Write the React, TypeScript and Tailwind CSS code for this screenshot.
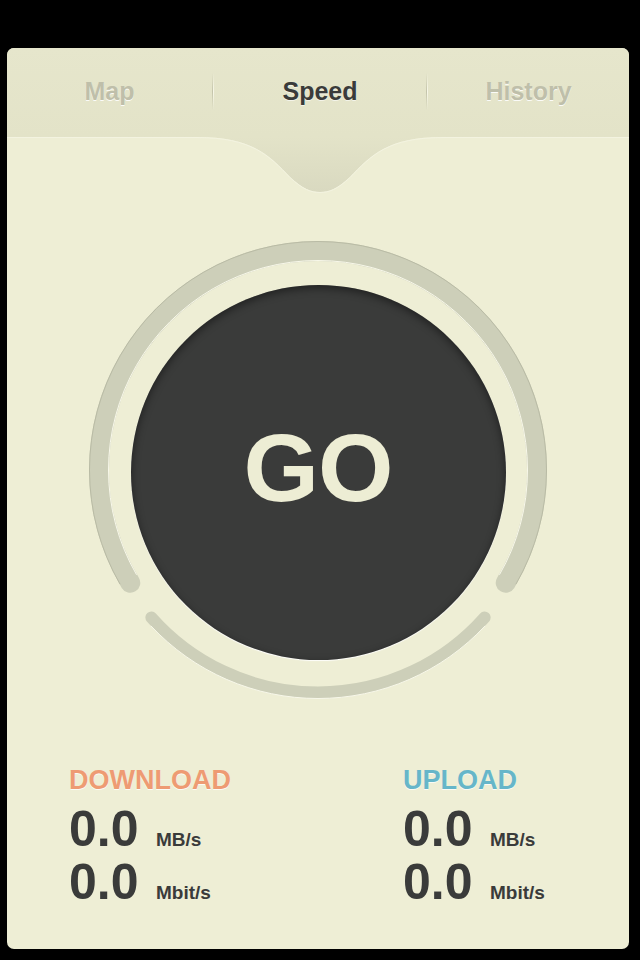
import React from "react";

const CX = 235;
const CY = 235;

function pt(r: number, deg: number, side: -1 | 1) {
  const a = (deg * Math.PI) / 180;
  return [CX + side * r * Math.cos(a), CY + r * Math.sin(a)];
}

function Gauge() {
  const r1 = 219;
  const a1 = 31;
  const [l1x, l1y] = pt(r1, a1, -1);
  const [r1x, r1y] = pt(r1, a1, 1);
  const ro = 228.5;
  const [lox, loy] = pt(ro, a1 - 1, -1);
  const [rox, roy] = pt(ro, a1 - 1, 1);
  const ri = 209.5;
  const [lix, liy] = pt(ri, a1 - 1, -1);
  const [rix, riy] = pt(ri, a1 - 1, 1);
  const r2 = 222.5;
  const a2 = 41.5;
  const [l2x, l2y] = pt(r2, a2, -1);
  const [r2x, r2y] = pt(r2, a2, 1);
  const r2o = 228.5;
  const [l2ox, l2oy] = pt(r2o, a2 + 1.5, -1);
  const [r2ox, r2oy] = pt(r2o, a2 + 1.5, 1);
  return (
    <div className="relative w-[470px] h-[470px] flex items-center justify-center">
      <svg className="absolute inset-0" width="470" height="470" viewBox="0 0 470 470">
        <path
          d={`M ${l1x} ${l1y} A ${r1} ${r1} 0 1 1 ${r1x} ${r1y}`}
          fill="none"
          stroke="#cdcfb9"
          strokeWidth="20"
          strokeLinecap="round"
        />
        <path
          d={`M ${lox} ${loy} A ${ro} ${ro} 0 1 1 ${rox} ${roy}`}
          fill="none"
          stroke="#b9bba5"
          strokeWidth="1"
        />
        <path
          d={`M ${lix} ${liy} A ${ri} ${ri} 0 1 1 ${rix} ${riy}`}
          fill="none"
          stroke="#f8f8ea"
          strokeWidth="1"
        />
        <path
          d={`M ${l2x} ${l2y} A ${r2} ${r2} 0 0 0 ${r2x} ${r2y}`}
          fill="none"
          stroke="#cdcfb9"
          strokeWidth="12"
          strokeLinecap="round"
        />
        <path
          d={`M ${l2ox} ${l2oy} A ${r2o} ${r2o} 0 0 0 ${r2ox} ${r2oy}`}
          fill="none"
          stroke="#f8f8ea"
          strokeWidth="1"
        />
      </svg>
      <div className="relative mt-[4px] w-[375px] h-[375px] rounded-full bg-[#3a3b3a] flex items-center justify-center pb-[10px] shadow-[inset_0_3px_9px_rgba(0,0,0,0.45),0_1px_1px_rgba(255,255,255,0.9)]">
        <span className="text-[97px] leading-none font-bold text-[#ededd4] tracking-[-1px]">GO</span>
      </div>
    </div>
  );
}

function Stat({ label, color }: { label: string; color: string }) {
  return (
    <div className="flex flex-col">
      <div className={`text-[27px] leading-none font-bold ${color} [text-shadow:0_1px_0_rgba(255,255,255,0.8)]`}>
        {label}
      </div>
      <div className="mt-[10px] flex items-baseline text-[#3a3b3a]">
        <span className="text-[50px] leading-none font-bold w-[87px]">0.0</span>
        <span className="text-[19px] leading-none font-bold">MB/s</span>
      </div>
      <div className="mt-[3px] flex items-baseline text-[#3a3b3a]">
        <span className="text-[50px] leading-none font-bold w-[87px]">0.0</span>
        <span className="text-[19px] leading-none font-bold">Mbit/s</span>
      </div>
    </div>
  );
}

function Divider() {
  return (
    <div className="w-[2px] h-[37px] flex">
      <div className="w-px h-full bg-gradient-to-b from-transparent via-[#c4c4ab] to-transparent" />
      <div className="w-px h-full bg-gradient-to-b from-transparent via-[#f7f7e8] to-transparent" />
    </div>
  );
}

export default function App() {
  return (
    <div
      className="min-h-[960px] w-[640px] bg-black pt-[48px] pl-[7px]"
      style={{ fontFamily: '"Liberation Sans", Arial, sans-serif' }}
    >
      <div className="w-[622px] h-[901px] rounded-[7px] overflow-hidden bg-[#eeeed5] flex flex-col">
        <div className="h-[89px] bg-gradient-to-b from-[#e6e6cc] to-[#e3e3c8] flex items-center pb-[2px]">
          <div className="w-[205px] text-center text-[25px] font-bold text-[#bfbfaa] [text-shadow:0_1px_0_rgba(255,255,255,0.9)]">
            Map
          </div>
          <Divider />
          <div className="w-[212px] text-center text-[25px] font-bold text-[#3a3b3a] [text-shadow:0_1px_0_rgba(255,255,255,0.6)]">
            Speed
          </div>
          <Divider />
          <div className="flex-1 text-center text-[25px] font-bold text-[#bfbfaa] [text-shadow:0_1px_0_rgba(255,255,255,0.9)]">
            History
          </div>
        </div>
        <svg width="622" height="56" viewBox="0 0 622 56" className="block">
          <defs>
            <linearGradient id="ng" x1="0" y1="0" x2="0" y2="1">
              <stop offset="0" stopColor="#e3e3c8" />
              <stop offset="1" stopColor="#d9d9c0" />
            </linearGradient>
          </defs>
          <path
            d="M 190 0 C 245 0, 262 18, 283 40 C 296 52, 304 55, 313 55 C 322 55, 330 52, 343 40 C 364 18, 381 0, 436 0 Z"
            fill="url(#ng)"
          />
          <path
            d="M 0 0.5 L 190 0.5 C 245 0.5, 262 18.5, 283 40.5 C 296 52.5, 304 55.5, 313 55.5 C 322 55.5, 330 52.5, 343 40.5 C 364 18.5, 381 0.5, 436 0.5 L 622 0.5"
            fill="none"
            stroke="#f3f3e0"
            strokeWidth="1"
          />
        </svg>
        <div className="mt-[42px] flex justify-center">
          <Gauge />
        </div>
        <div className="mt-[62px] pl-[62px] flex">
          <div className="w-[334px]">
            <Stat label="DOWNLOAD" color="text-[#ee9b73]" />
          </div>
          <Stat label="UPLOAD" color="text-[#66b6c9]" />
        </div>
      </div>
    </div>
  );
}
